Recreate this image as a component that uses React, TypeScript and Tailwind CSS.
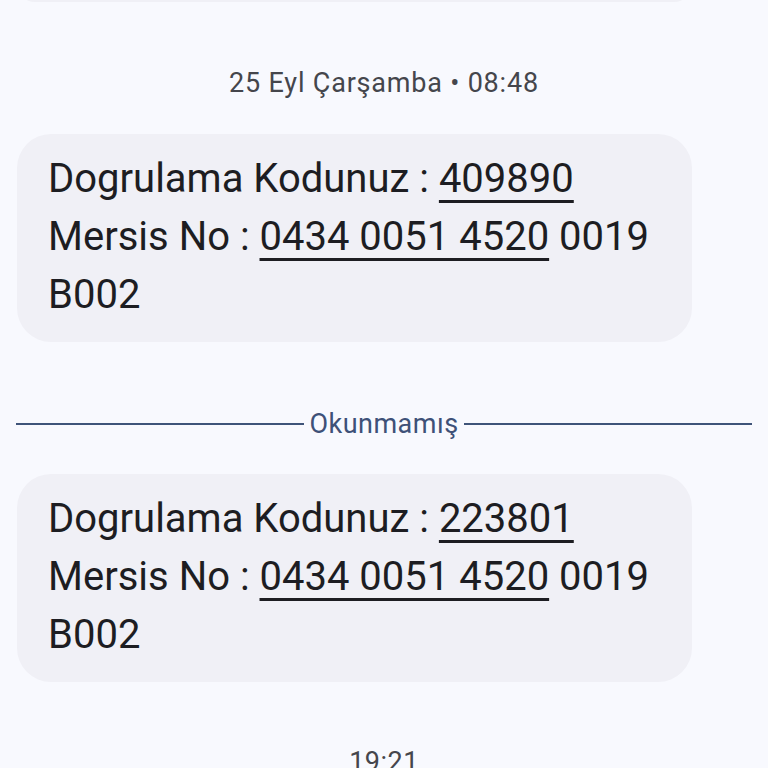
import React from "react";

const font = { fontFamily: "Roboto, 'Noto Sans', sans-serif" };

function Bubble({ code }: { code: string }) {
  return (
    <div className="ml-[17px] w-[675px] rounded-[34px] bg-[#f0f0f6] pl-[31px] pr-[20px] pt-[16px] pb-[18px] text-[40px] leading-[58px] text-[#1d1d22]">
      <div>
        Dogrulama Kodunuz :{" "}
        <span className="underline decoration-[3px] underline-offset-[8px]">{code}</span>
      </div>
      <div>
        Mersis No :{" "}
        <span className="underline decoration-[3px] underline-offset-[8px]">0434 0051 4520</span>{" "}
        0019
      </div>
      <div>B002</div>
    </div>
  );
}

export default function App() {
  return (
    <div className="w-[768px] h-[768px] overflow-hidden bg-[#f8f9fe]" style={font}>
      <div className="ml-[17px] w-[675px] h-[36px] -mt-[34px] rounded-[34px] bg-[#f0f0f6]" />
      <div className="mt-[64px] text-center text-[27px] leading-[34px] tracking-[0.8px] text-[#45464c]">
        25 Eyl Çarşamba • 08:48
      </div>
      <div className="mt-[34px]">
        <Bubble code="409890" />
      </div>
      <div className="mt-[66px] flex items-center px-[16px]">
        <div className="h-[2px] flex-1 bg-[#3f5479]" />
        <div className="px-[5px] text-[27px] leading-[32px] tracking-[0.5px] text-[#3e5178]">Okunmamış</div>
        <div className="h-[2px] flex-1 bg-[#3f5479]" />
      </div>
      <div className="mt-[34px]">
        <Bubble code="223801" />
      </div>
      <div className="mt-[63px] text-center text-[27px] leading-[34px] tracking-[0.5px] text-[#45464c]">19:21</div>
    </div>
  );
}
